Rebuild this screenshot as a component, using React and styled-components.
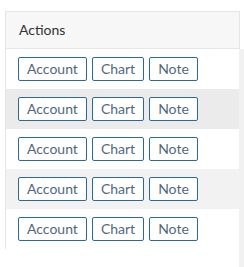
import React from 'react';
import styled, { createGlobalStyle } from 'styled-components';

const GlobalStyle = createGlobalStyle`
    html, body {
        margin: 0;
        padding: 0;
        background: #fff;
    }
    body {
        font-family: Lato, "Open Sans", sans-serif;
    }
`;

const rows = [
    { tone: 'white' },
    { tone: 'hover' },
    { tone: 'white' },
    { tone: 'stripe' },
    { tone: 'white' },
];

const tones = {
    white: '#ffffff',
    hover: '#ebebeb',
    stripe: '#f2f2f2',
};

const App = () => {
    return <StyledPage>
        <GlobalStyle />
        <StyledHeader>
            <StyledHeaderCell>Actions</StyledHeaderCell>
        </StyledHeader>
        <StyledBody>
            <StyledRows>
                {rows.map((r, k) => {
                    return <StyledRow key={k} tone={tones[r.tone]}>
                        <StyledButton>Account</StyledButton>
                        <StyledButton>Chart</StyledButton>
                        <StyledButton>Note</StyledButton>
                    </StyledRow>
                })}
            </StyledRows>
            <StyledTrack />
        </StyledBody>
    </StyledPage>
};

const StyledPage = styled.div`
    width: 244px;
    height: 267px;
    padding-top: 11px;
    padding-left: 5px;
    box-sizing: border-box;
    display: flex;
    flex-direction: column;
    overflow: hidden;
`;

const StyledHeader = styled.div`
    width: 235px;
    height: 38px;
    box-sizing: border-box;
    display: flex;
    align-items: center;
    background-color: #f7f7f7;
    border: 1px solid #e6e6e6;
`;

const StyledHeaderCell = styled.div`
    padding-left: 13px;
    font-size: 14px;
    color: #333;
    padding-bottom: 1px;
`;

const StyledBody = styled.div`
    flex: 1;
    display: flex;
    align-items: flex-start;
`;

const StyledRows = styled.div`
    width: 234px;
    display: flex;
    flex-direction: column;
    border-left: 1px solid #e6e6e6;
    box-sizing: border-box;
`;

const StyledRow = styled.div`
    height: 40px;
    display: flex;
    align-items: center;
    gap: 5px;
    padding-left: 12px;
    box-sizing: border-box;
    background-color: ${props => props.tone};
`;

const StyledButton = styled.button`
    height: 24px;
    padding: 0 8px;
    font-family: Lato, "Open Sans", sans-serif;
    font-size: 14px;
    color: #52677d;
    background: #fff;
    border: 1px solid #2c6a96;
    border-radius: 2px;
    line-height: 20px;
    cursor: pointer;
`;

const StyledTrack = styled.div`
    align-self: stretch;
    width: 5px;
    background-color: #f1f1f1;
`;

export default App;
